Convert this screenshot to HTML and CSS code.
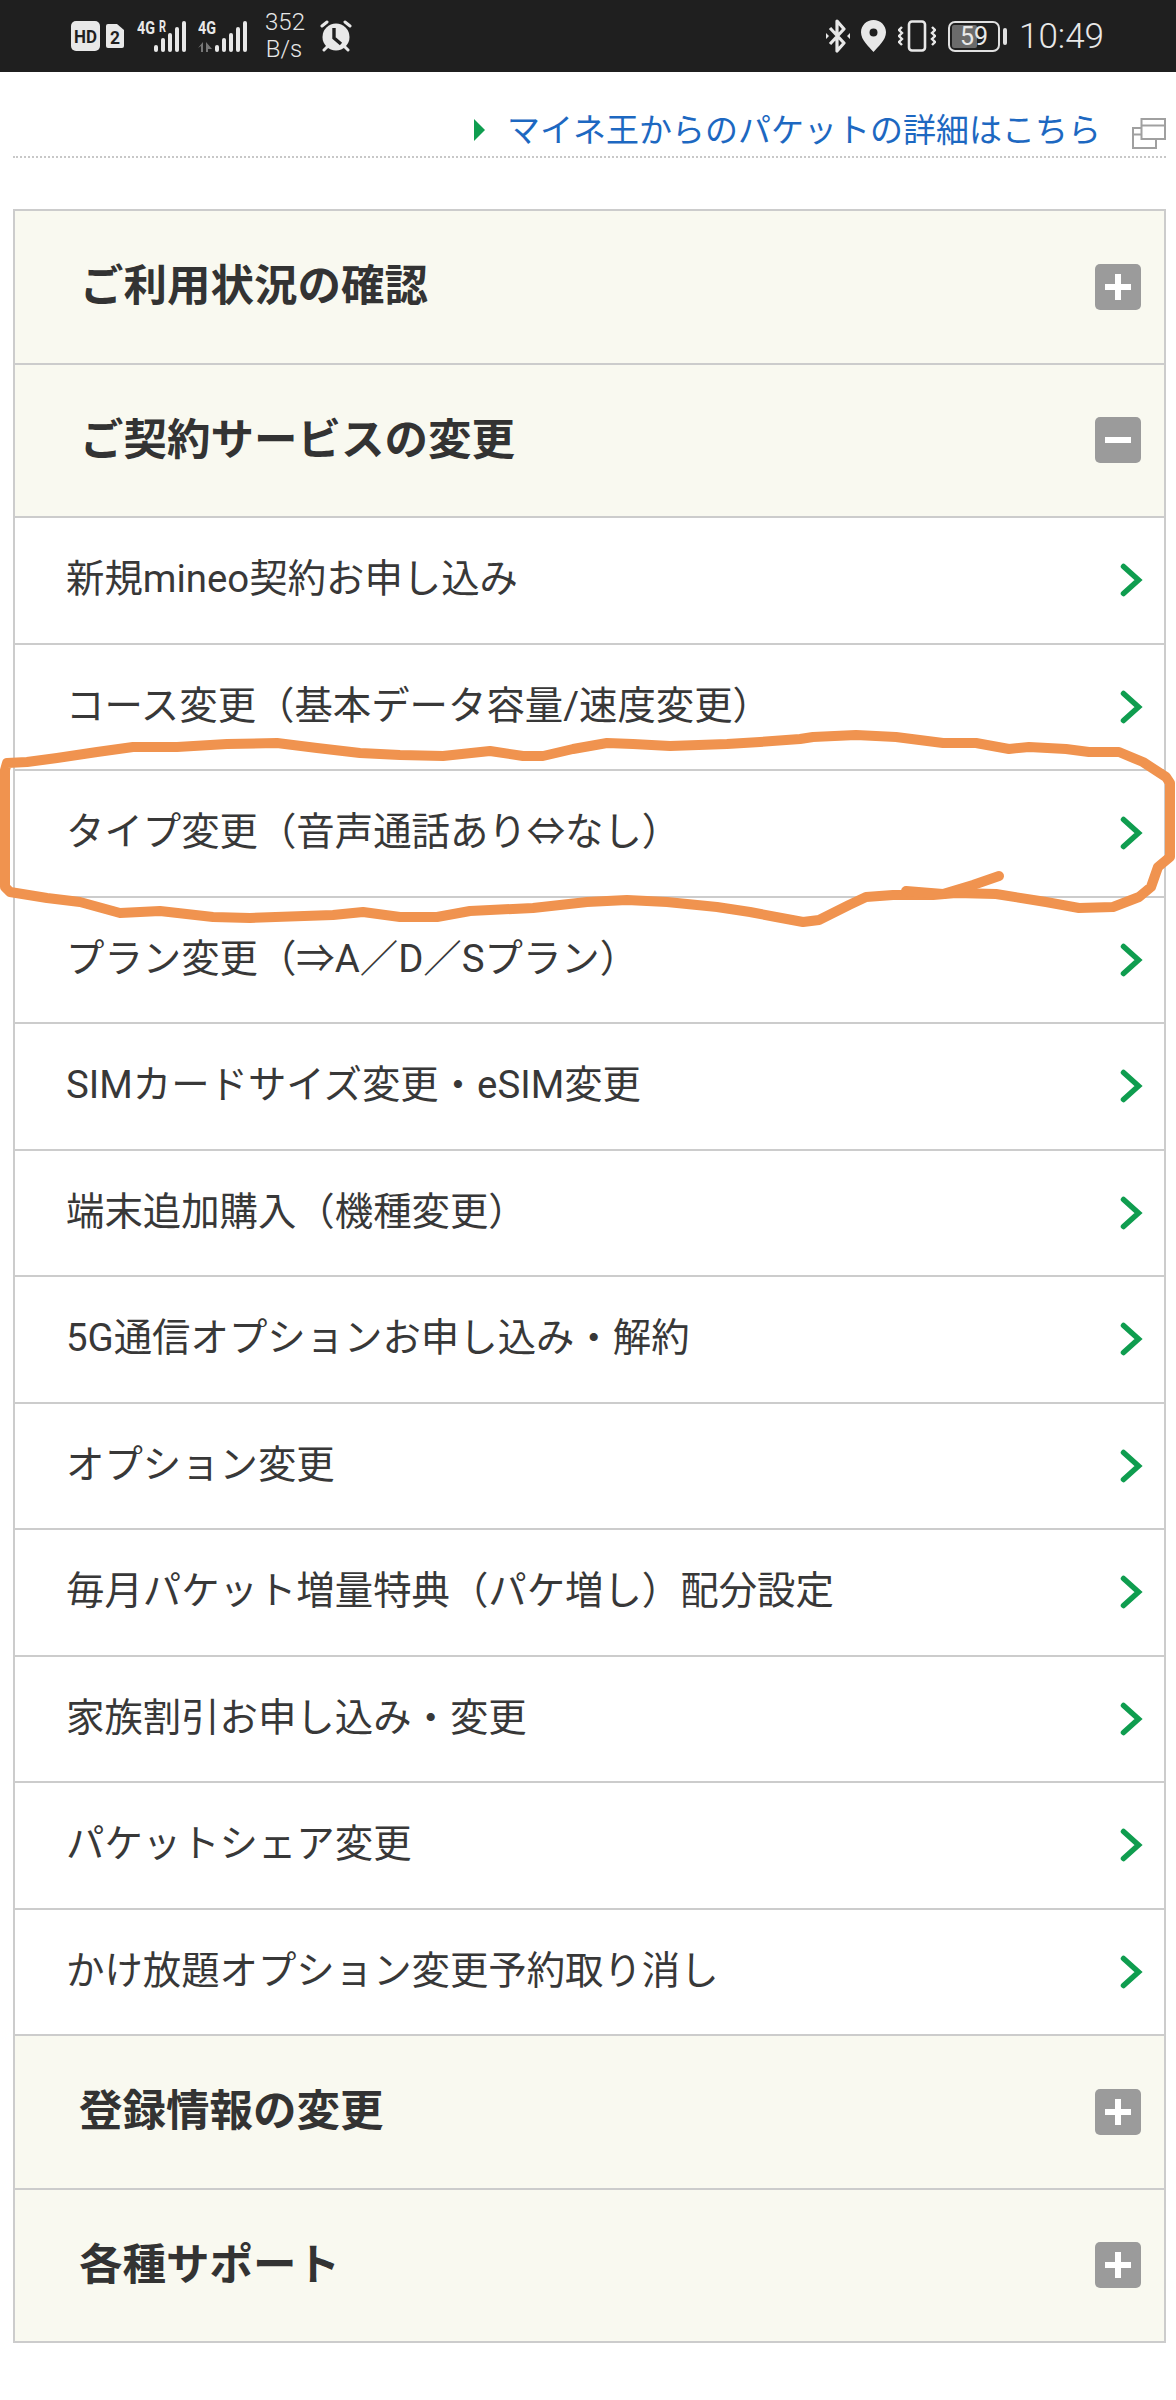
FILE: index.html
```html
<!DOCTYPE html>
<html lang="ja">
<head>
    <meta charset="UTF-8">
    <meta name="viewport" content="width=device-width, initial-scale=1.0">
    <title>mineo マイページ</title>
    <link rel="stylesheet" href="styles.css">
</head>
<body>

    <div class="status-bar">
        <div class="status-left">
            <svg class="hd-badge" width="29" height="30" viewBox="0 0 29 30"><rect width="29" height="30" rx="5" fill="#e8e8e8"/><text x="3" y="22" class="badge-text" textLength="23" lengthAdjust="spacingAndGlyphs">HD</text></svg>
            <svg class="sim-icon" width="18" height="24" viewBox="0 0 18 24"><path d="M2 0h9l7 6v16a2 2 0 0 1-2 2H2a2 2 0 0 1-2-2V2a2 2 0 0 1 2-2z" fill="#e8e8e8"/><text x="4" y="19.500" class="badge-text" textLength="10" lengthAdjust="spacingAndGlyphs">2</text></svg>
            <svg class="signal signal-one" width="50" height="38" viewBox="0 -6 50 38">
                <text x="0" y="14" class="net-label" textLength="18" lengthAdjust="spacingAndGlyphs">4G</text>
                <text x="22" y="12" class="net-small" textLength="7" lengthAdjust="spacingAndGlyphs">R</text>
                <rect x="17" y="25" width="4" height="7" rx="2"/>
                <rect x="24" y="18" width="4" height="14" rx="2"/>
                <rect x="31" y="13" width="4" height="19" rx="2"/>
                <rect x="38" y="7" width="4" height="25" rx="2"/>
                <rect x="45" y="1" width="4" height="31" rx="2"/>
            </svg>
            <svg class="signal signal-two" width="50" height="38" viewBox="0 -6 50 38">
                <text x="0" y="14" class="net-label" textLength="18" lengthAdjust="spacingAndGlyphs">4G</text>
                <path d="M5 22v10H3v-6l-3 2zM8 22l6 7-4 0v3H8z" fill="#777"/>
                <rect x="17" y="25" width="4" height="7" rx="2"/>
                <rect x="24" y="18" width="4" height="14" rx="2"/>
                <rect x="31" y="13" width="4" height="19" rx="2"/>
                <rect x="38" y="7" width="4" height="25" rx="2"/>
                <rect x="45" y="1" width="4" height="31" rx="2"/>
            </svg>
            <div class="net-speed">352<br>B/s</div>
            <svg class="alarm" width="34" height="32" viewBox="0 0 34 32">
                <circle cx="17" cy="17" r="13.5" fill="#e8e8e8"/>
                <path d="M3 6l5-4M31 6l-5-4M5 30l3-3M29 30l-3-3" stroke="#e8e8e8" stroke-width="3" stroke-linecap="round" fill="none"/>
                <path d="M15 8v10l7 6" stroke="#1f1f1f" stroke-width="3.4" fill="none"/>
            </svg>
        </div>
        <div class="status-right">
            <svg class="bt" width="24" height="34" viewBox="0 0 24 34"><path d="M4 9l14 15-7 8V2l7 8L4 25" fill="none" stroke="#e8e8e8" stroke-width="3.2" stroke-linejoin="round"/><path d="M0 14l3 3-3 3zM24 14l-3 3 3 3z" fill="#e8e8e8"/></svg>
            <svg class="pin" width="25" height="32" viewBox="0 0 25 32"><path fill-rule="evenodd" d="M12.5 0C5.6 0 0 5.5 0 12.3 0 20 8 27 12.5 32 17 27 25 20 25 12.3 25 5.5 19.4 0 12.5 0zm0 8.5a4 4 0 1 1 0 8 4 4 0 0 1 0-8z" fill="#e8e8e8"/></svg>
            <svg class="vibrate" width="38" height="32" viewBox="0 0 38 32">
                <rect x="11" y="1.5" width="16" height="29" rx="3" fill="none" stroke="#e8e8e8" stroke-width="2.6"/>
                <path d="M4 7L1 10l3 3-3 3 3 3-3 3 3 3M34 7l3 3-3 3 3 3-3 3 3 3-3 3" fill="none" stroke="#e8e8e8" stroke-width="2.4"/>
            </svg>
            <div class="battery">
                <div class="battery-body">
                    <div class="battery-fill"></div>
                    <span class="battery-num">59</span>
                </div>
                <div class="battery-tip"></div>
            </div>
            <div class="clock">10:49</div>
        </div>
    </div>

    <div class="packet-link">
        <span class="link-arrow"></span>
        <a href="#" class="link-text">マイネ王からのパケットの詳細はこちら</a>
        <svg class="window-icon" width="34" height="31" viewBox="0 0 34 31">
            <rect x="9.5" y="1" width="23.5" height="20" fill="#fff" stroke="#a0a0a0" stroke-width="2"/>
            <path d="M9.5 7.500H33" stroke="#a0a0a0" stroke-width="2"/>
            <path d="M9.500 10H1v20h23v-9M1 16.500h8.500" fill="none" stroke="#a0a0a0" stroke-width="2"/>
        </svg>
    </div>

    <div class="menu">
        <div class="menu-head">
            <span class="head-title">ご利用状況の確認</span>
            <span class="toggle plus"></span>
        </div>
        <div class="menu-head">
            <span class="head-title">ご契約サービスの変更</span>
            <span class="toggle"></span>
        </div>

        <ul class="menu-list">
            <li><a href="#">新規mineo契約お申し込み</a><svg class="chevron" width="24" height="36" viewBox="0 0 24 36"><path d="M3.500 4.500L18.500 18L3.500 31.500"/></svg></li>
            <li><a href="#">コース変更（基本データ容量/速度変更）</a><svg class="chevron" width="24" height="36" viewBox="0 0 24 36"><path d="M3.500 4.500L18.500 18L3.500 31.500"/></svg></li>
            <li><a href="#">タイプ変更（音声通話あり⇔なし）</a><svg class="chevron" width="24" height="36" viewBox="0 0 24 36"><path d="M3.500 4.500L18.500 18L3.500 31.500"/></svg></li>
            <li><a href="#">プラン変更（⇒A／D／Sプラン）</a><svg class="chevron" width="24" height="36" viewBox="0 0 24 36"><path d="M3.500 4.500L18.500 18L3.500 31.500"/></svg></li>
            <li><a href="#">SIMカードサイズ変更・eSIM変更</a><svg class="chevron" width="24" height="36" viewBox="0 0 24 36"><path d="M3.500 4.500L18.500 18L3.500 31.500"/></svg></li>
            <li><a href="#">端末追加購入（機種変更）</a><svg class="chevron" width="24" height="36" viewBox="0 0 24 36"><path d="M3.500 4.500L18.500 18L3.500 31.500"/></svg></li>
            <li><a href="#">5G通信オプションお申し込み・解約</a><svg class="chevron" width="24" height="36" viewBox="0 0 24 36"><path d="M3.500 4.500L18.500 18L3.500 31.500"/></svg></li>
            <li><a href="#">オプション変更</a><svg class="chevron" width="24" height="36" viewBox="0 0 24 36"><path d="M3.500 4.500L18.500 18L3.500 31.500"/></svg></li>
            <li><a href="#">毎月パケット増量特典（パケ増し）配分設定</a><svg class="chevron" width="24" height="36" viewBox="0 0 24 36"><path d="M3.500 4.500L18.500 18L3.500 31.500"/></svg></li>
            <li><a href="#">家族割引お申し込み・変更</a><svg class="chevron" width="24" height="36" viewBox="0 0 24 36"><path d="M3.500 4.500L18.500 18L3.500 31.500"/></svg></li>
            <li><a href="#">パケットシェア変更</a><svg class="chevron" width="24" height="36" viewBox="0 0 24 36"><path d="M3.500 4.500L18.500 18L3.500 31.500"/></svg></li>
            <li><a href="#">かけ放題オプション変更予約取り消し</a><svg class="chevron" width="24" height="36" viewBox="0 0 24 36"><path d="M3.500 4.500L18.500 18L3.500 31.500"/></svg></li>
        </ul>

        <div class="menu-head head-low">
            <span class="head-title">登録情報の変更</span>
            <span class="toggle plus"></span>
        </div>
        <div class="menu-head head-low">
            <span class="head-title">各種サポート</span>
            <span class="toggle plus"></span>
        </div>
    </div>

    <!-- hand drawn marker circled over the screenshot -->
    <svg class="marker" width="1176" height="2400" viewBox="0 0 1176 2400">
        <path d="M5 770L7 763L27 762L57 758L97 752L133 747L177 747L227 744L277 743L317 748L360 753L400 755L443 756L490 751L523 756L543 756L573 749L607 743L633 744L670 746L727 744L760 742L800 739L813 737L856 735L896 737L943 743L976 743L1009 749L1029 747L1066 749L1089 752L1119 752L1143 762L1166 777L1170 783L1170 857L1158 867L1151 887L1139 897L1113 907L1079 908L1046 902L996 894L956 893L933 895L893 895L866 897L849 905L819 920L803 922L776 917L750 912L717 907L667 902L627 900L587 902L533 908L470 911L437 917L400 917L363 912L333 915L250 918L213 917L160 911L120 913L80 902L47 898L10 892L5 887Z"/>
        <path d="M906 891L943 894L973 885L999 876"/>
    </svg>

</body>
</html>
```

FILE: styles.css
```css
body {
    font-family: "Noto Sans CJK JP", "Noto Sans", sans-serif;
    background-color: #fff;
    color: #333;
    margin: 0;
    position: relative;
    height: 2400px;
    overflow: hidden;
}

/* Status bar */
.status-bar {
    height: 72px;
    background-color: #1f1f1f;
    color: #e8e8e8;
    display: flex;
    justify-content: space-between;
    align-items: center;
    font-family: Roboto, sans-serif;
}

.status-left {
    display: flex;
    align-items: center;
    padding-left: 71px;
}

.status-right {
    display: flex;
    align-items: center;
    padding-right: 72px;
}

.badge-text {
    font-size: 19px;
    font-weight: 700;
    fill: #1f1f1f;
}

.sim-icon {
    margin-left: 6px;
}

.signal {
    fill: #e8e8e8;
    margin-top: -6px;
}

.signal-one {
    margin-left: 13px;
}

.signal-two {
    margin-left: 11px;
}

.net-label {
    font-size: 19px;
    font-weight: 700;
}

.net-small {
    font-size: 16px;
    font-weight: 700;
}

.net-speed {
    margin-left: 17px;
    width: 38px;
    font-size: 24px;
    line-height: 27px;
    font-weight: 300;
    text-align: center;
}

.alarm {
    margin-left: 16px;
}

.pin {
    margin-left: 11px;
}

.vibrate {
    margin-left: 12px;
}

.battery {
    margin-left: 12px;
    display: flex;
    align-items: center;
}

.battery-body {
    width: 52px;
    height: 31px;
    box-sizing: border-box;
    border: 2.500px solid #e0e0e0;
    border-radius: 7px;
    position: relative;
    display: flex;
    align-items: center;
    justify-content: center;
}

.battery-fill {
    position: absolute;
    left: 2px;
    top: 2px;
    bottom: 2px;
    width: 25px;
    background-color: #6b6b6b;
    border-radius: 2px;
}

.battery-num {
    position: relative;
    font-size: 25px;
    font-weight: 400;
    line-height: 1;
}

.battery-tip {
    width: 4px;
    height: 17px;
    margin-left: 3px;
    background-color: #e0e0e0;
    border-radius: 2px;
}

.clock {
    margin-left: 12px;
    font-size: 35px;
    font-weight: 300;
    line-height: 1;
}

/* Link above the menu */
.packet-link {
    height: 86px;
    box-sizing: border-box;
    margin: 0 10px 0 13px;
    padding-top: 32px;
    border-bottom: 2px dotted #c8c8c8;
    display: flex;
    align-items: center;
    justify-content: flex-end;
}

.link-arrow {
    width: 0;
    height: 0;
    border-left: 11px solid #0f9d4f;
    border-top: 11px solid transparent;
    border-bottom: 11px solid transparent;
    margin-right: 22px;
}

.link-text {
    color: #1d68c1;
    font-size: 33px;
    text-decoration: none;
    line-height: 1.2;
    margin-bottom: 2px;
}

.window-icon {
    margin-left: 31px;
    margin-top: 6px;
}

/* Accordion menu */
.menu {
    margin: 51px 10px 0 13px;
    border-left: 2px solid #ccc;
    border-right: 2px solid #ccc;
    border-bottom: 2px solid #ccc;
}

.menu-head {
    height: 153.500px;
    box-sizing: border-box;
    border-top: 2px solid #ccc;
    background-color: #f9f9f0;
    display: flex;
    align-items: center;
    justify-content: space-between;
    padding: 0 23px 0 65px;
}

.head-low {
    padding-left: 64px;
}

.head-title {
    font-size: 43.500px;
    font-weight: 700;
    color: #333;
    line-height: 1.4;
    padding-bottom: 6px;
}

.toggle {
    width: 46px;
    height: 46px;
    background-color: #9b9b9b;
    border-radius: 5px;
    position: relative;
}

.toggle::before {
    content: "";
    position: absolute;
    left: 10px;
    top: 20px;
    width: 26px;
    height: 6px;
    background-color: #fff;
}

.toggle.plus::after {
    content: "";
    position: absolute;
    left: 20px;
    top: 10px;
    width: 6px;
    height: 26px;
    background-color: #fff;
}

.menu-list {
    list-style: none;
    margin: 0;
    padding: 0;
}

.menu-list li {
    height: 126.500px;
    box-sizing: border-box;
    border-top: 2px solid #ccc;
    display: flex;
    align-items: center;
    justify-content: space-between;
    padding: 0 20px 0 51px;
}

.menu-list a {
    font-family: Roboto, "Noto Sans CJK JP", sans-serif;
    color: #383838;
    font-size: 38.400px;
    line-height: 1.4;
    padding-bottom: 2px;
    text-decoration: none;
}

.chevron {
    fill: none;
    stroke: #0f9d4f;
    stroke-width: 5.500;
    stroke-linecap: round;
    stroke-linejoin: miter;
}

/* Marker drawing */
.marker {
    position: absolute;
    left: 0;
    top: 0;
    pointer-events: none;
}

.marker path {
    fill: none;
    stroke: #f0934f;
    stroke-width: 10;
    stroke-linecap: round;
    stroke-linejoin: round;
}
```
